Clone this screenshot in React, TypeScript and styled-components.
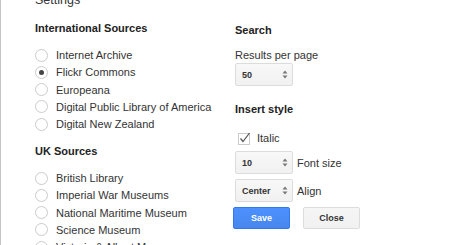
import styled, { createGlobalStyle } from 'styled-components'

const GlobalStyle = createGlobalStyle`
  html, body {
    margin: 0;
    padding: 0;
    background: #fff;
    overflow: hidden;
  }
  body {
    font-family: 'Liberation Sans', Arial, sans-serif;
    font-size: 11px;
    color: #222;
  }
`

const Page = styled.div`
  min-height: 100vh;
  border-left: 1px solid #c4c4c4;
  padding-left: 34px;
  box-sizing: border-box;
`

const Title = styled.div`
  margin-top: -8px;
  font-size: 12.5px;
  line-height: 16px;
  color: #333;
`

const Columns = styled.div`
  display: grid;
  grid-template-columns: 200px 1fr;
  margin-top: 13px;
`

const Section = styled.div<{ $gap?: number }>`
  margin-top: ${p => p.$gap || 0}px;
`

const Heading = styled.div<{ $top?: number; $bottom?: number }>`
  font-weight: bold;
  font-size: 11px;
  line-height: 14px;
  margin-top: ${p => p.$top || 0}px;
  margin-bottom: ${p => (p.$bottom === undefined ? 11.4 : p.$bottom)}px;
  color: #222;
`

const RadioRow = styled.label`
  display: flex;
  align-items: center;
  height: 17.25px;
  gap: 8px;
  color: #333;
`

const Radio = styled.span<{ $checked?: boolean }>`
  position: relative;
  width: 13px;
  height: 13px;
  box-sizing: border-box;
  border: 1px solid #cbcbcb;
  border-radius: 50%;
  background: #fff;
  flex: none;
  &::after {
    content: '';
    display: ${p => (p.$checked ? 'block' : 'none')};
    position: absolute;
    left: 3px;
    top: 3px;
    width: 5px;
    height: 5px;
    border-radius: 50%;
    background: #444;
  }
`

const Label = styled.div`
  line-height: 15px;
  color: #333;
  margin-bottom: 0.5px;
`

const Select = styled.div`
  display: flex;
  align-items: center;
  justify-content: space-between;
  width: 58px;
  height: 23px;
  box-sizing: border-box;
  padding: 0 4px 0 6px;
  background: linear-gradient(#f8f8f8, #f1f1f1);
  border: 1px solid #dcdcdc;
  border-radius: 2px;
  font-size: 9px;
  font-weight: bold;
  color: #333;
`

const FieldRow = styled.div<{ $top?: number }>`
  display: flex;
  align-items: center;
  gap: 4px;
  margin-top: ${p => p.$top || 0}px;
  color: #333;
`

const CheckRow = styled.div`
  display: flex;
  align-items: center;
  height: 14px;
  margin-top: 15px;
  margin-left: 3px;
  gap: 5px;
  color: #333;
`

const Buttons = styled.div`
  display: flex;
  gap: 13px;
  margin-top: 5px;
  margin-left: -2px;
`

const Button = styled.button<{ $primary?: boolean }>`
  width: 57px;
  height: 22px;
  padding: 0;
  border-radius: 2px;
  font-family: 'Liberation Sans', Arial, sans-serif;
  font-size: 9px;
  font-weight: bold;
  border: 1px solid ${p => (p.$primary ? '#3079ed' : '#dcdcdc')};
  background: ${p => (p.$primary ? 'linear-gradient(#4d90fe, #4787ed)' : 'linear-gradient(#f5f5f5, #f1f1f1)')};
  color: ${p => (p.$primary ? '#fff' : '#333')};
`

const Arrows = () => (
  <svg width="6" height="9" viewBox="0 0 6 9">
    <path d="M0.5 3.5 L3 0.5 L5.5 3.5 Z" fill="#777" />
    <path d="M0.5 5.5 L3 8.5 L5.5 5.5 Z" fill="#777" />
  </svg>
)

const CheckBox = () => (
  <svg width="14" height="13" viewBox="0 0 14 13">
    <rect x="0.5" y="1.5" width="11" height="11" fill="#fff" stroke="#cbcbcb" />
    <path d="M2.5 6.5 L5 9.5 L11.5 1" fill="none" stroke="#555" strokeWidth="1.2" />
  </svg>
)

const intl = [
  'Internet Archive',
  'Flickr Commons',
  'Europeana',
  'Digital Public Library of America',
  'Digital New Zealand',
]

const uk = [
  'British Library',
  'Imperial War Museums',
  'National Maritime Museum',
  'Science Museum',
  'Victoria & Albert Museum',
]

export default function App() {
  return (
    <>
      <GlobalStyle />
      <Page>
        <Title>Settings</Title>
        <Columns>
          <div>
            <Section>
              <Heading>International Sources</Heading>
              {intl.map(name => (
                <RadioRow key={name}>
                  <Radio $checked={name === 'Flickr Commons'} />
                  {name}
                </RadioRow>
              ))}
            </Section>
            <Section $gap={11.4}>
              <Heading>UK Sources</Heading>
              {uk.map(name => (
                <RadioRow key={name}>
                  <Radio />
                  {name}
                </RadioRow>
              ))}
            </Section>
          </div>
          <div>
            <Heading $top={2} $bottom={10.5}>Search</Heading>
            <Label>Results per page</Label>
            <Select>
              <span>50</span>
              <Arrows />
            </Select>
            <Heading $top={16} $bottom={0}>Insert style</Heading>
            <CheckRow>
              <CheckBox />
              Italic
            </CheckRow>
            <FieldRow $top={6}>
              <Select>
                <span>10</span>
                <Arrows />
              </Select>
              Font size
            </FieldRow>
            <FieldRow $top={5}>
              <Select>
                <span>Center</span>
                <Arrows />
              </Select>
              Align
            </FieldRow>
            <Buttons>
              <Button $primary>Save</Button>
              <Button>Close</Button>
            </Buttons>
          </div>
        </Columns>
      </Page>
    </>
  )
}
